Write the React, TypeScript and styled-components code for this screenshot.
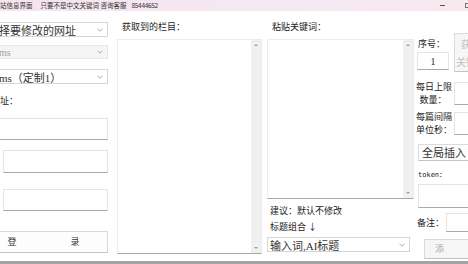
import styled, { createGlobalStyle } from 'styled-components';

const GlobalStyle = createGlobalStyle`
  html, body {
    margin: 0;
    padding: 0;
    background: #ffffff;
  }
  body {
    font-family: "Noto Sans CJK SC", "Noto Sans", sans-serif;
    color: #222;
  }
`;

const Window = styled.div`
  width: 468px;
  height: 264px;
  overflow: hidden;
  display: flex;
  flex-direction: column;
  background: #ffffff;
`;

const TitleBar = styled.div`
  height: 11px;
  flex: none;
  display: flex;
  align-items: center;
  background: linear-gradient(90deg, #f6e4ee 0%, #f4e9f3 60%, #f8e8f0 100%);
  font-size: 6.5px;
  line-height: 11px;
  color: #333;
  white-space: nowrap;
  .notice {
    margin-left: 8px;
  }
  .phone {
    margin-left: 5px;
    letter-spacing: -0.3px;
  }
`;

const WinControls = styled.div`
  margin-left: auto;
  display: flex;
  align-items: center;
  gap: 20px;
  margin-right: -2px;
  .min {
    width: 5px;
    height: 1px;
    background: #555;
  }
  .max {
    width: 5px;
    height: 5px;
    border: 1px solid #777;
    box-sizing: border-box;
  }
`;

const Main = styled.div`
  flex: 1;
  display: flex;
  align-items: flex-start;
  overflow: hidden;
`;

const BottomBar = styled.div`
  height: 3px;
  flex: none;
  background: #a4a4a4;
`;

const Column = styled.div<{ $width: number; $left?: number }>`
  flex: none;
  width: ${p => p.$width}px;
  margin-left: ${p => p.$left ?? 0}px;
  display: flex;
  flex-direction: column;
`;

const Label = styled.div<{ $top?: number; $left?: number }>`
  font-size: 9px;
  line-height: 12px;
  height: 12px;
  margin-top: ${p => p.$top ?? 0}px;
  margin-left: ${p => p.$left ?? 0}px;
  white-space: nowrap;
  color: #222;
`;

const Select = styled.div<{ $top?: number; $bleed?: number; $disabled?: boolean; $height?: number }>`
  height: ${p => p.$height ?? 15}px;
  box-sizing: border-box;
  margin-top: ${p => p.$top ?? 0}px;
  margin-left: ${p => -(p.$bleed ?? 0)}px;
  padding-left: ${p => (p.$bleed ? p.$bleed - 2 : 2)}px;
  padding-right: 4px;
  border: 1px solid ${p => (p.$disabled ? '#e8e8e8' : '#d6d6d6')};
  background: ${p => (p.$disabled ? '#f5f5f5' : '#ffffff')};
  color: ${p => (p.$disabled ? '#a0a0a0' : '#333')};
  font-family: "Liberation Serif", "Noto Sans CJK SC", serif;
  font-size: ${p => (p.$disabled ? 10 : 11)}px;
  display: flex;
  align-items: center;
  white-space: nowrap;
  span {
    flex: 1;
    overflow: hidden;
  }
  svg {
    flex: none;
  }
`;

const Input = styled.div<{ $top?: number; $bleed?: number; $height: number; $width?: number }>`
  height: ${p => p.$height}px;
  width: ${p => (p.$width ? `${p.$width}px` : 'auto')};
  box-sizing: border-box;
  flex: none;
  margin-top: ${p => p.$top ?? 0}px;
  margin-left: ${p => p.$bleed ?? 0}px;
  border: 1px solid #e4e4e4;
  border-bottom: 1px solid #a8a8a8;
  background: #ffffff;
  display: flex;
  align-items: center;
  justify-content: center;
  font-family: "Liberation Serif", serif;
  font-size: 10px;
  color: #222;
`;

const Button = styled.div<{ $top?: number; $bleed?: number; $height: number; $width?: number; $muted?: boolean }>`
  height: ${p => p.$height}px;
  width: ${p => (p.$width ? `${p.$width}px` : 'auto')};
  box-sizing: border-box;
  flex: none;
  margin-top: ${p => p.$top ?? 0}px;
  margin-left: ${p => p.$bleed ?? 0}px;
  border: 1px solid #dadada;
  border-bottom-color: #c4c4c4;
  background: ${p => (p.$muted ? '#f6f6f6' : '#fdfdfd')};
  color: ${p => (p.$muted ? '#a8a8a8' : '#333')};
  display: flex;
  flex-direction: column;
  align-items: center;
  justify-content: center;
  font-size: 9px;
  line-height: 12px;
  white-space: nowrap;
`;

const SpacedButton = styled(Button)<{ $spread: number }>`
  flex-direction: row;
  gap: ${p => p.$spread}px;
`;

const FetchButton = styled(Button)`
  font-size: 10px;
  gap: 6px;
  color: #c2c2c2;
`;

const WideButton = styled(Button)`
  align-items: flex-start;
  padding-left: 3px;
  font-family: "Liberation Serif", "Noto Sans CJK SC", serif;
  font-size: 11px;
  color: #333;
`;

const ListBox = styled.div<{ $height: number }>`
  height: ${p => p.$height}px;
  margin-top: 6px;
  box-sizing: border-box;
  border: 1px solid #ececec;
  border-bottom: 1px solid #a8a8a8;
  background: #ffffff;
  display: flex;
  justify-content: flex-end;
`;

const ScrollTrack = styled.div`
  width: 10px;
  height: 100%;
  background: #f0f0f0;
  display: flex;
  flex-direction: column;
  justify-content: space-between;
  align-items: center;
  padding: 4px 0;
  box-sizing: border-box;
`;

const Arrow = styled.div<{ $down?: boolean }>`
  width: 0;
  height: 0;
  border-left: 2px solid transparent;
  border-right: 2px solid transparent;
  ${p => (p.$down ? 'border-top: 2px solid #a0a0a0;' : 'border-bottom: 2px solid #a0a0a0;')}
`;

const Row = styled.div<{ $top?: number; $gap?: number; $align?: string }>`
  display: flex;
  align-items: ${p => p.$align ?? 'flex-start'};
  gap: ${p => p.$gap ?? 4}px;
  margin-top: ${p => p.$top ?? 0}px;
`;

const SideLabel = styled.div`
  width: 34px;
  flex: none;
  font-size: 9px;
  line-height: 13px;
  text-align: center;
  white-space: nowrap;
`;

const TokenLabel = styled(Label)`
  font-family: "DejaVu Sans Mono", "Noto Sans CJK SC", monospace;
  font-size: 7px;
`;

const Chevron = () => (
  <svg width="6" height="4" viewBox="0 0 6 4">
    <path d="M0.5 0.8 L3 3.2 L5.5 0.8" fill="none" stroke="#9a9a9a" strokeWidth="0.8" />
  </svg>
);

const Scrollbar = () => (
  <ScrollTrack>
    <Arrow />
    <Arrow $down />
  </ScrollTrack>
);

export default function App() {
  return (
    <>
      <GlobalStyle />
      <Window>
        <TitleBar>
          <span>站信息界面</span>
          <span className="notice">只要不是中文关键词 咨询客服</span>
          <span className="phone">85444652</span>
          <WinControls>
            <div className="min" />
            <div className="max" />
          </WinControls>
        </TitleBar>
        <Main>
          <Column $width={108}>
            <Select $top={11} $bleed={3}>
              <span>择要修改的网址</span>
              <Chevron />
            </Select>
            <Select $top={8} $bleed={3} $disabled $height={14}>
              <span>ms</span>
              <Chevron />
            </Select>
            <Select $top={10} $bleed={3}>
              <span>ms（定制1）</span>
              <Chevron />
            </Select>
            <Label $top={11}>址：</Label>
            <Input $top={11} $bleed={-2} $height={22} />
            <Input $top={10} $bleed={3} $height={23} />
            <Input $top={16} $bleed={3} $height={22} />
            <SpacedButton $top={20} $bleed={-21} $height={22} $spread={54}>
              <span>登</span>
              <span>录</span>
            </SpacedButton>
          </Column>

          <Column $width={145} $left={9}>
            <Label $top={10} $left={5}>获取到的栏目：</Label>
            <ListBox $height={215}>
              <Scrollbar />
            </ListBox>
          </Column>

          <Column $width={147} $left={5}>
            <Label $top={10} $left={5}>粘贴关键词：</Label>
            <ListBox $height={160}>
              <Scrollbar />
            </ListBox>
            <Label $top={6} $left={3}>建议：默认不修改</Label>
            <Label $top={4} $left={3}>标题组合 ↓</Label>
            <Select $top={4} $height={15} style={{ width: 143 }}>
              <span>输入词,AI标题</span>
              <Chevron />
            </Select>
          </Column>

          <Column $width={62} $left={2}>
            <Row $top={22} $gap={4}>
              <Column $width={34}>
                <Label $top={5} $left={2}>序号：</Label>
                <Input $top={2} $bleed={1} $height={18} $width={32}>1</Input>
              </Column>
              <FetchButton $height={39} $width={34} $muted>
                <span>获取</span>
                <span>关键词</span>
              </FetchButton>
            </Row>
            <Row $top={8}>
              <SideLabel>每日上限<br />数量：</SideLabel>
              <Input $top={2} $height={23} $width={30} />
            </Row>
            <Row $top={4}>
              <SideLabel>每篇间隔<br />单位秒：</SideLabel>
              <Input $top={2} $height={23} $width={30} />
            </Row>
            <WideButton $top={8} $bleed={2} $height={17} $width={56}>全局插入</WideButton>
            <TokenLabel $top={8} $left={2}>token：</TokenLabel>
            <Input $top={3} $bleed={2} $height={24} $width={56} />
            <Row $top={5} $gap={2} $align="center">
              <Label $left={1}>备注：</Label>
              <Input $height={19} $width={30} />
            </Row>
            <SpacedButton $top={7} $bleed={8} $height={20} $width={70} $muted $spread={30}>
              <span>添</span>
              <span>加</span>
            </SpacedButton>
          </Column>
        </Main>
        <BottomBar />
      </Window>
    </>
  );
}
